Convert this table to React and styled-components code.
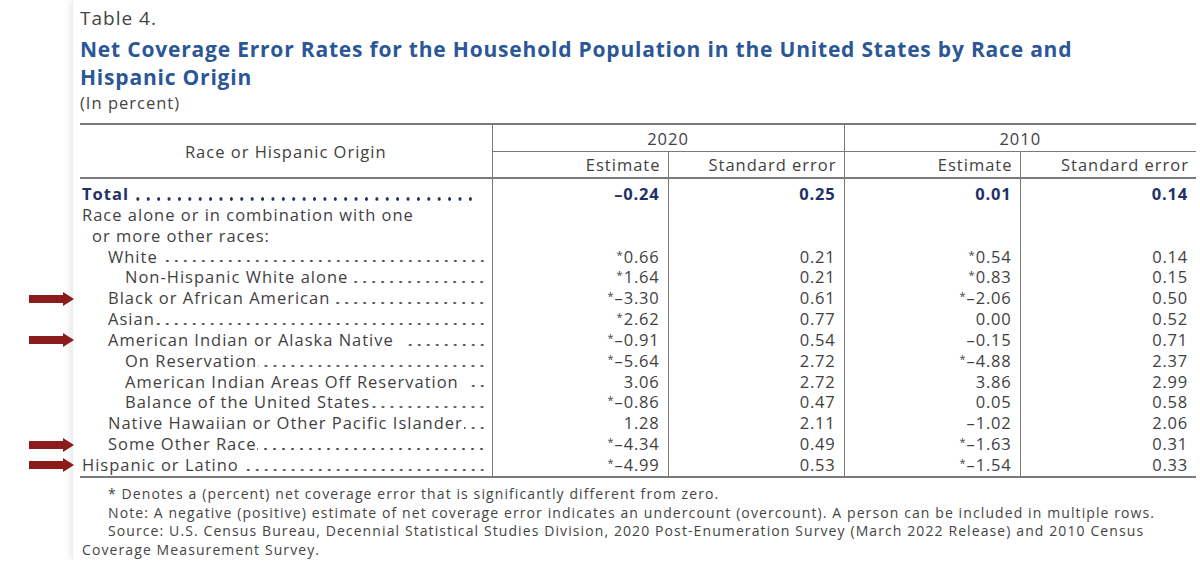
import React from 'react';
import styled, { createGlobalStyle } from 'styled-components';

const GlobalStyle = createGlobalStyle`
  body {
    margin: 0;
    background: #ffffff;
    font-family: 'Open Sans', 'Liberation Sans', sans-serif;
    color: #3f3f3f;
  }
`;

// Panel that holds the whole table
const Panel = styled.div`
  margin-left: 73px;
  height: 560px;
  padding: 6px 4px 0 7px;
  box-sizing: border-box;
  background: #ffffff;
  box-shadow: -3px 0 6px rgba(0, 0, 0, 0.09);
`;

const Caption = styled.div`
  font-size: 19px;
  line-height: 24px;
  letter-spacing: 1px;
  color: #444;
`;

const Title = styled.h1`
  margin: 5px 0 0;
  font-size: 21px;
  line-height: 28px;
  font-weight: 700;
  letter-spacing: 0.8px;
  color: #2b5797;
  width: 1010px;
`;

const Unit = styled.div`
  margin-top: 2px;
  font-size: 16.5px;
  line-height: 20px;
  letter-spacing: 1px;
  color: #444;
`;

const Table = styled.table`
  margin-top: 10px;
  width: 1116px;
  border-collapse: collapse;
  table-layout: fixed;
  font-size: 16.5px;
  letter-spacing: 1px;
  color: #3f3f3f;
`;

const HeadCell = styled.th`
  font-weight: 400;
  padding: 0 7px;
  height: ${p => p.$h}px;
  text-align: ${p => p.$align || 'center'};
  border-top: ${p => (p.$top ? '2px solid #7a7a7a' : 'none')};
  border-bottom: ${p => (p.$bottom ? `${p.$bottom}px solid #7a7a7a` : 'none')};
  border-right: ${p => (p.$right ? '1.5px solid #7a7a7a' : 'none')};
  vertical-align: middle;
`;

const Row = styled.tr`
  & > td {
    padding-top: ${p => (p.$first ? 5 : 0)}px;
    border-bottom: ${p => (p.$last ? '2px solid #7a7a7a' : 'none')};
  }
`;

const LabelCell = styled.td`
  position: relative;
  padding: 0 4px 0 0;
  height: 20.85px;
  line-height: 20.85px;
  border-right: 1.5px solid #7a7a7a;
`;

const LabelLine = styled.div`
  display: flex;
  align-items: stretch;
  padding-left: ${p => p.$indent}px;
  font-weight: ${p => (p.$bold ? 700 : 400)};
  color: ${p => (p.$bold ? '#1f3168' : '#3f3f3f')};
  white-space: nowrap;
`;

const Leader = styled.span`
  flex: 1;
  margin-left: ${p => p.$gap}px;
  margin-right: ${p => (p.$bold ? 11 : 0)}px;
  background-image: radial-gradient(
    circle,
    ${p => (p.$bold ? '#1f3168' : '#4a4a4a')} ${p => (p.$bold ? 1.5 : 1)}px,
    transparent ${p => (p.$bold ? 1.9 : 1.4)}px
  );
  background-size: ${p => (p.$bold ? 10.4 : 9)}px 4px;
  background-repeat: repeat-x;
  background-position: right 1px bottom 4px;
`;

const NumCell = styled.td`
  text-align: right;
  padding: 0 8px 0 0;
  height: 20.85px;
  line-height: 20.85px;
  letter-spacing: 0.8px;
  font-weight: ${p => (p.$bold ? 700 : 400)};
  color: ${p => (p.$bold ? '#1f3168' : '#3f3f3f')};
  border-right: ${p => (p.$right ? '1.5px solid #7a7a7a' : 'none')};
`;

const Star = styled.span`
  position: relative;
  top: -4px;
  font-size: 11px;
  line-height: 0;
  letter-spacing: 0;
  margin-right: 1px;
`;

const Arrow = styled.svg`
  position: absolute;
  left: -51px;
  top: 50%;
  margin-top: ${p => (p.$first ? -5 : -7)}px;
`;

const Notes = styled.div`
  margin-top: 7px;
  font-size: 14px;
  line-height: 18.7px;
  letter-spacing: 1.1px;
  color: #444;
  width: 1116px;
`;

const Note = styled.p`
  margin: 0;
  padding-left: 2px;
  text-indent: 26px;
`;

const rows = [
  { label: 'Total', indent: 2, bold: true, gap: 6, v: ['–0.24', '0.25', '0.01', '0.14'] },
  { label: 'Race alone or in combination with one', indent: 2, noDots: true },
  { label: 'or more other races:', indent: 12, noDots: true },
  { label: 'White', indent: 28, gap: 6, v: ['*0.66', '0.21', '*0.54', '0.14'] },
  { label: 'Non-Hispanic White alone', indent: 45, gap: 5, v: ['*1.64', '0.21', '*0.83', '0.15'] },
  { label: 'Black or African American', indent: 28, gap: 1, arrow: true, v: ['*–3.30', '0.61', '*–2.06', '0.50'] },
  { label: 'Asian', indent: 28, gap: 1, v: ['*2.62', '0.77', '0.00', '0.52'] },
  { label: 'American Indian or Alaska Native', indent: 28, gap: 10, arrow: true, v: ['*–0.91', '0.54', '–0.15', '0.71'] },
  { label: 'On Reservation', indent: 45, gap: 1, v: ['*–5.64', '2.72', '*–4.88', '2.37'] },
  { label: 'American Indian Areas Off Reservation', indent: 45, gap: 8, v: ['3.06', '2.72', '3.86', '2.99'] },
  { label: 'Balance of the United States', indent: 45, gap: 1, v: ['*–0.86', '0.47', '0.05', '0.58'] },
  { label: 'Native Hawaiian or Other Pacific Islander', indent: 28, gap: 1, v: ['1.28', '2.11', '–1.02', '2.06'] },
  { label: 'Some Other Race', indent: 28, gap: 1, arrow: true, v: ['*–4.34', '0.49', '*–1.63', '0.31'] },
  { label: 'Hispanic or Latino', indent: 2, gap: 6, arrow: true, v: ['*–4.99', '0.53', '*–1.54', '0.33'] },
];

const Value = ({ text }) =>
  text.startsWith('*') ? (
    <>
      <Star>*</Star>
      {text.slice(1)}
    </>
  ) : (
    text
  );

const RedArrow = () => (
  <Arrow width="45" height="14" viewBox="0 0 45 14">
    <rect x="0" y="3" width="36" height="8" fill="#8c1c1c" />
    <polygon points="34,0 45,7 34,14" fill="#8c1c1c" />
  </Arrow>
);

const App = () => (
  <>
    <GlobalStyle />
    <Panel>
      <Caption>Table 4.</Caption>
      <Title>Net Coverage Error Rates for the Household Population in the United States by Race and Hispanic Origin</Title>
      <Unit>(In percent)</Unit>

      <Table>
        <colgroup>
          <col style={{ width: 412 }} />
          <col style={{ width: 176 }} />
          <col style={{ width: 176 }} />
          <col style={{ width: 176 }} />
          <col style={{ width: 176 }} />
        </colgroup>
        <thead>
          <tr>
            <HeadCell rowSpan={2} $top $bottom={2} $right $h={51}>
              Race or Hispanic Origin
            </HeadCell>
            <HeadCell colSpan={2} $top $bottom={1} $right $h={26}>2020</HeadCell>
            <HeadCell colSpan={2} $top $bottom={1} $h={26}>2010</HeadCell>
          </tr>
          <tr>
            <HeadCell $align="right" $bottom={2} $right $h={25}>Estimate</HeadCell>
            <HeadCell $align="right" $bottom={2} $right $h={25}>Standard error</HeadCell>
            <HeadCell $align="right" $bottom={2} $right $h={25}>Estimate</HeadCell>
            <HeadCell $align="right" $bottom={2} $h={25}>Standard error</HeadCell>
          </tr>
        </thead>
        <tbody>
          {rows.map((r, i) => (
            <Row key={r.label} $first={i === 0} $last={i === rows.length - 1}>
              <LabelCell>
                {r.arrow && <RedArrow />}
                <LabelLine $indent={r.indent} $bold={r.bold}>
                  <span>{r.label}</span>
                  {!r.noDots && <Leader $gap={r.gap} $bold={r.bold} />}
                </LabelLine>
              </LabelCell>
              {[0, 1, 2, 3].map(c => (
                <NumCell key={c} $bold={r.bold} $right={c < 3}>
                  {r.v ? <Value text={r.v[c]} /> : ''}
                </NumCell>
              ))}
            </Row>
          ))}
        </tbody>
      </Table>

      <Notes>
        <Note>* Denotes a (percent) net coverage error that is significantly different from zero.</Note>
        <Note>
          Note: A negative (positive) estimate of net coverage error indicates an undercount (overcount). A person can be
          included in multiple rows.
        </Note>
        <Note>
          Source: U.S. Census Bureau, Decennial Statistical Studies Division, 2020 Post-Enumeration Survey (March 2022
          Release) and 2010 Census Coverage Measurement Survey.
        </Note>
      </Notes>
    </Panel>
  </>
);

export default App;
